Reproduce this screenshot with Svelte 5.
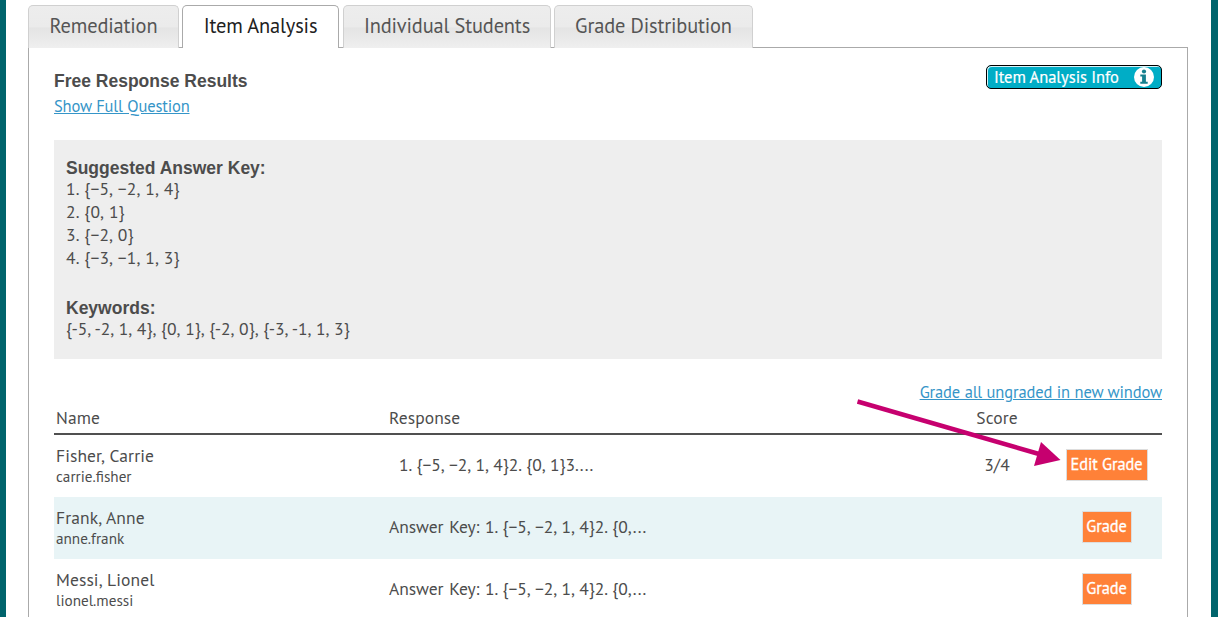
<script>
	const tabs = [
		{ label: 'Remediation', width: 151 },
		{ label: 'Item Analysis', width: 157 },
		{ label: 'Individual Students', width: 208 },
		{ label: 'Grade Distribution', width: 199 }
	];
	let activeTab = $state('Item Analysis');

	const answers = ['1. {−5, −2, 1, 4}', '2. {0, 1}', '3. {−2, 0}', '4. {−3, −1, 1, 3}'];

	const students = [
		{
			name: 'Fisher, Carrie',
			login: 'carrie.fisher',
			response: '1. {−5, −2, 1, 4}2. {0, 1}3....',
			score: '3/4'
		},
		{
			name: 'Frank, Anne',
			login: 'anne.frank',
			response: 'Answer Key: 1. {−5, −2, 1, 4}2. {0,...',
			score: ''
		},
		{
			name: 'Messi, Lionel',
			login: 'lionel.messi',
			response: 'Answer Key: 1. {−5, −2, 1, 4}2. {0,...',
			score: ''
		}
	];
</script>

<div class="page">
	<div class="tabs">
		{#each tabs as tab}
			<button
				class="tab"
				class:active={tab.label === activeTab}
				style="width: {tab.width}px"
				onclick={() => (activeTab = tab.label)}
			>
				{tab.label}
			</button>
		{/each}
	</div>

	<div class="panel">
		<div class="top">
			<div>
				<h2>Free Response Results</h2>
				<a href="#question">Show Full Question</a>
			</div>
			<button class="info">
				<span>Item Analysis Info</span>
				<svg width="20" height="20" viewBox="0 0 20 20">
					<circle cx="10" cy="10" r="10" fill="#fff" />
					<circle cx="10" cy="4.5" r="2.1" fill="#16808e" />
					<path d="M6.3 7.6h5.6v7.1h1.8v2H6.3v-2h1.8V9.5H6.3z" fill="#16808e" />
				</svg>
			</button>
		</div>

		<div class="key">
			<h3>Suggested Answer Key:</h3>
			{#each answers as answer}
				<div class="line">{answer}</div>
			{/each}
			<h3 class="second">Keywords:</h3>
			<div class="line keywords">{'{-5, -2, 1, 4}, {0, 1}, {-2, 0}, {-3, -1, 1, 3}'}</div>
		</div>

		<div class="grade-all">
			<a href="#grade">Grade all ungraded in new window</a>
		</div>

		<div class="row header">
			<div>Name</div>
			<div>Response</div>
			<div class="center">Score</div>
			<div></div>
		</div>
		{#each students as student}
			<div class="row student">
				<div>
					<div class="name">{student.name}</div>
					<div class="login">{student.login}</div>
				</div>
				<div class="response" class:graded={student.score}>{student.response}</div>
				<div class="center score">{student.score}</div>
				<div class="center action">
					<button class="grade" class:edit={student.score}>
						{student.score ? 'Edit Grade' : 'Grade'}
					</button>
				</div>
			</div>
		{/each}
	</div>

	<!-- pointer to the edit button -->
	<svg class="arrow" width="206" height="70" viewBox="0 0 206 70">
		<path d="M1.5 3.5 183 56" stroke="#c6006f" stroke-width="4.5" />
		<path d="M185 44 204.5 62 178 68z" fill="#c6006f" />
	</svg>
</div>

<style>
	:global(body) {
		margin: 0;
		overflow: hidden;
	}

	.page {
		position: relative;
		box-sizing: border-box;
		height: 617px;
		overflow: hidden;
		padding: 5px 23px 0 22px;
		border-left: 6px solid #00646c;
		border-right: 7px solid #00646c;
		background: #fff;
		color: #4c4c4c;
		font-family: 'PT Sans', Lato, sans-serif;
		font-size: 17.5px;
		letter-spacing: 0.1px;
		word-spacing: 1px;
	}

	button {
		margin: 0;
		padding: 0;
		box-sizing: border-box;
		font-family: inherit;
		cursor: pointer;
	}

	.tabs {
		position: relative;
		display: flex;
		gap: 3px;
		margin-bottom: -1px;
	}

	.tab {
		height: 43px;
		padding-bottom: 3px;
		border: 1px solid #d0d0d0;
		border-bottom: none;
		border-radius: 5px 5px 0 0;
		background: linear-gradient(#ededed 0%, #ebebeb 50%, #e4e4e4 52%, #efefef 100%);
		color: #555;
		font-size: 20.4px;
		letter-spacing: -0.15px;
		white-space: nowrap;
	}

	.tab.active {
		margin-right: 1px;
		border-color: #aaa;
		background: #fff;
		color: #212121;
	}

	.panel {
		padding: 17px 25px 0;
		height: 600px;
		border: 1px solid #aaa;
	}

	.top {
		display: flex;
		justify-content: space-between;
		align-items: flex-start;
		height: 75px;
	}

	h2,
	h3 {
		margin: 0;
		font-family: 'Liberation Sans', Arial, sans-serif;
		font-size: 17.5px;
		font-weight: bold;
		letter-spacing: 0;
		word-spacing: 0;
		line-height: 22px;
	}

	h2 {
		margin-top: 5px;
	}

	a {
		color: #3595c8;
		font-size: 16.5px;
		letter-spacing: -0.14px;
		word-spacing: 0.3px;
		line-height: 28px;
		text-decoration: underline;
		text-underline-offset: 1px;
	}

	.info {
		display: flex;
		align-items: center;
		justify-content: space-between;
		width: 176px;
		height: 24px;
		padding: 0 7px;
		border: 1px solid #000;
		border-radius: 5px;
		background: #00adc6;
		box-shadow: inset 1px 1px 0 #d8f4f8;
		color: #fff;
		font-size: 16.5px;
		letter-spacing: -0.05px;
		-webkit-text-stroke: 0.2px #fff;
	}

	.key {
		box-sizing: border-box;
		height: 219px;
		padding: 17px 12px;
		background: #eee;
	}

	.key h3 {
		margin-bottom: -2px;
	}

	.line {
		line-height: 23px;
		word-spacing: 1.4px;
	}

	.keywords {
		letter-spacing: 0;
		word-spacing: 1.3px;
	}

	h3.second {
		margin-top: 28px;
	}

	.grade-all {
		height: 46px;
		padding-top: 19px;
		box-sizing: border-box;
		text-align: right;
	}

	.row {
		display: grid;
		grid-template-columns: 333px 554px 112px 107px;
		align-items: center;
		box-sizing: border-box;
	}

	.row > div:first-child,
	.row > div:nth-child(2) {
		padding-left: 2px;
	}

	.header {
		height: 30px;
		padding-bottom: 4px;
		border-bottom: 2px solid #505050;
	}

	.student {
		height: 62px;
	}

	.student:nth-child(even) {
		background: #e8f4f6;
	}

	.center {
		text-align: center;
	}

	.name {
		line-height: 22px;
	}

	.login {
		font-size: 15.2px;
		letter-spacing: 0;
		line-height: 20px;
	}

	.response,
	.score {
		padding-bottom: 4px;
	}

	.action {
		padding-bottom: 2px;
	}

	.response {
		letter-spacing: -0.03px;
	}

	.row > .response.graded {
		padding-left: 12px;
	}

	.grade {
		width: 50px;
		height: 32px;
		padding-bottom: 3px;
		border: 1px solid #ddd;
		background: #ff8138;
		color: #fff;
		font-size: 16.4px;
		letter-spacing: -0.1px;
		-webkit-text-stroke: 0.3px #fff;
	}

	.grade.edit {
		width: 82px;
	}

	.arrow {
		position: absolute;
		left: 850px;
		top: 398px;
	}
</style>
